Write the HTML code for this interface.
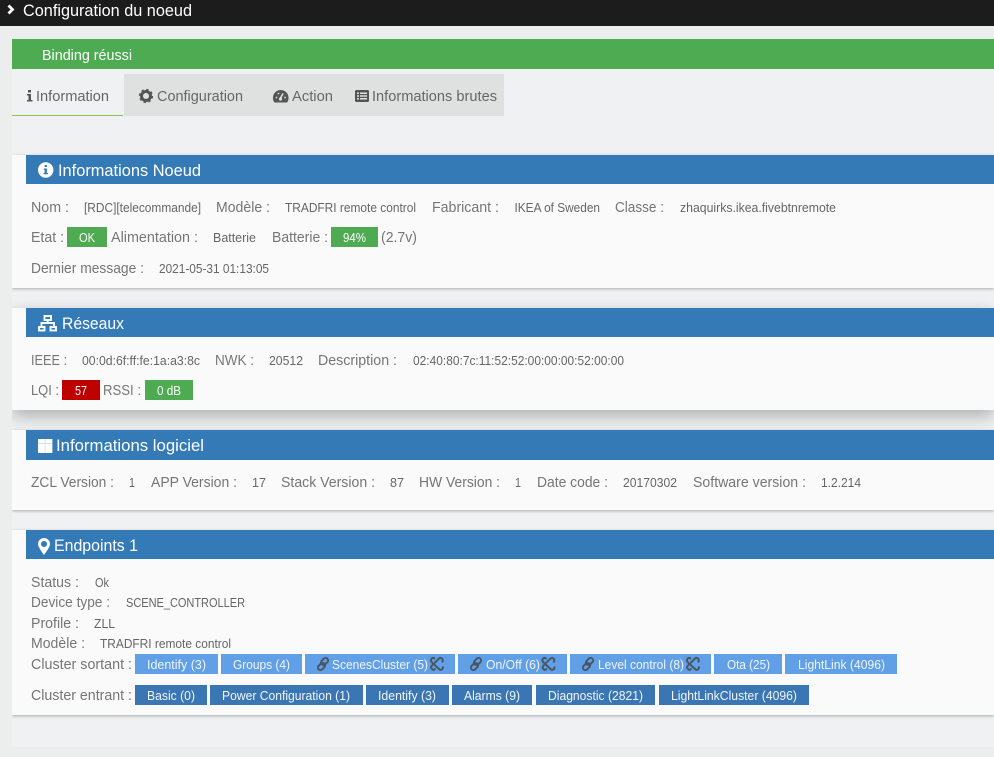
<!DOCTYPE html>
<html lang="fr"><head><meta charset="utf-8"><title>Configuration du noeud</title>
<style>
html,body{margin:0;padding:0;width:994px;height:757px;overflow:hidden;background:#eceeee}
div{position:absolute}
svg{position:absolute;left:0;top:0}
text{font-family:"Liberation Sans",sans-serif}
.l{font-size:14.5px;fill:#767676}
.v{font-size:12.5px;fill:#666}
.h{font-size:16.5px;fill:#fff}
.t{font-size:14.5px;fill:#666}
.b{font-size:12.5px;fill:#fff}
.bw{font-size:12.5px;fill:#f2f6fb}
.p{left:12px;width:982px;background:#fafafa;clip-path:inset(-40px 0 -40px 0)}
</style></head><body>
<div style="left:12px;top:26px;width:982px;height:721px;background:#f0f1f3"></div>
<div style="left:0;top:0;width:994px;height:26px;background:#1c1c1c"></div>
<div style="left:12px;top:26px;width:982px;height:13px;background:#eceeee"></div>
<div style="left:12px;top:39px;width:982px;height:30px;background:#4eab52"></div>
<div style="left:124px;top:74px;width:380px;height:42px;background:#dfe1e0"></div>
<div style="left:12px;top:115px;width:111px;height:1px;background:#8bc34a"></div>
<div class="p" style="top:155px;height:133px;box-shadow:0 1px 3px rgba(0,0,0,.3)"></div>
<div class="p" style="top:308px;height:102px;box-shadow:0 6px 16px rgba(0,0,0,.28)"></div>
<div class="p" style="top:430px;height:80px;box-shadow:0 1px 3px rgba(0,0,0,.3)"></div>
<div class="p" style="top:530px;height:185px;box-shadow:0 1px 3px rgba(0,0,0,.3)"></div>
<div style="left:26px;top:155px;width:968px;height:29px;background:#337ab7"></div>
<div style="left:26px;top:308px;width:968px;height:29px;background:#337ab7"></div>
<div style="left:26px;top:430px;width:968px;height:30px;background:#337ab7"></div>
<div style="left:26px;top:530px;width:968px;height:29px;background:#337ab7"></div>
<div style="left:67px;top:227px;width:40px;height:20px;background:#4eab52"></div>
<div style="left:331px;top:227px;width:47px;height:20px;background:#4eab52"></div>
<div style="left:62px;top:380px;width:38px;height:20px;background:#be0000"></div>
<div style="left:145px;top:380px;width:48px;height:20px;background:#4eab52"></div>
<div style="left:135px;top:654px;width:83px;height:20px;background:#619fe6"></div>
<div style="left:221px;top:654px;width:81px;height:20px;background:#619fe6"></div>
<div style="left:305px;top:654px;width:150px;height:20px;background:#619fe6"></div>
<div style="left:458px;top:654px;width:109px;height:20px;background:#619fe6"></div>
<div style="left:570px;top:654px;width:141px;height:20px;background:#619fe6"></div>
<div style="left:714px;top:654px;width:68px;height:20px;background:#619fe6"></div>
<div style="left:785px;top:654px;width:112px;height:20px;background:#619fe6"></div>
<div style="left:135px;top:685px;width:72px;height:20px;background:#3a76b4"></div>
<div style="left:210px;top:685px;width:153px;height:20px;background:#3a76b4"></div>
<div style="left:366px;top:685px;width:83px;height:20px;background:#3a76b4"></div>
<div style="left:452px;top:685px;width:80px;height:20px;background:#3a76b4"></div>
<div style="left:536px;top:685px;width:119px;height:20px;background:#3a76b4"></div>
<div style="left:659px;top:685px;width:150px;height:20px;background:#3a76b4"></div>

<svg width="994" height="757" viewBox="0 0 994 757" xmlns="http://www.w3.org/2000/svg">
<defs>
<g id="lk" fill="none" stroke="#4a5560" stroke-width="1.9">
<rect x="-1" y="-6.5" width="5" height="8" rx="2.5" transform="rotate(45 1.5 -2.5)"/>
<rect x="-4" y="-1.5" width="5" height="8" rx="2.5" transform="rotate(45 -1.5 2.5)"/>
</g>
<g id="ul" fill="none" stroke="#4a5560" stroke-width="1.9">
<path d="M-2 -5 L-3.2 -6 Q-5 -6.5 -6 -4.5 Q-6.5 -3 -5 -1.500 L2.500 5.500 Q4 6.500 5.500 5 Q6.500 3.500 5.500 2.500"/>
<path d="M5 -1.500 L5.500 -2.500 Q6.500 -4 5 -5.500 Q3.500 -6.500 2 -5.500 L-5 1.500 Q-6.500 3 -5.500 4.500 Q-4 6.500 -2.500 5.500 L-1.500 4.500"/>
</g>
</defs>
<!-- top -->
<path d="M8.500 5.500 L12.500 9.500 L8.500 13.500" fill="none" stroke="#fff" stroke-width="2.800"/>
<text class="h" x="23" y="16" textLength="169" lengthAdjust="spacingAndGlyphs">Configuration du noeud</text>
<text x="42" y="60" font-size="14.5" fill="#fff" textLength="90" lengthAdjust="spacingAndGlyphs">Binding réussi</text>
<!-- tabs -->
<path d="M28 90h3v2.500h-3zM27 94h4v6h1.500v1.500h-5.500v-1.500h1.500v-4.500h-1.500z" fill="#555"/>
<text class="t" x="36" y="101" textLength="73" lengthAdjust="spacingAndGlyphs">Information</text>
<circle cx="146" cy="96" r="4.500" fill="none" stroke="#555" stroke-width="3"/>
<circle cx="146" cy="96" r="6.200" fill="none" stroke="#555" stroke-width="1.800" stroke-dasharray="2.400 2.470"/>
<text class="t" x="157" y="101" textLength="86" lengthAdjust="spacingAndGlyphs">Configuration</text>
<path d="M274.500 102.500 A7.800 7.800 0 1 1 287 102.500 Z" fill="#555"/>
<path d="M280.500 98 L283 93.500" stroke="#dfe1e0" stroke-width="1.500"/>
<circle cx="280.500" cy="99" r="1.600" fill="#dfe1e0"/>
<circle cx="276.500" cy="97.500" r=".9" fill="#dfe1e0"/>
<circle cx="278.500" cy="93.500" r=".9" fill="#dfe1e0"/>
<circle cx="285" cy="97.500" r=".9" fill="#dfe1e0"/>
<text class="t" x="292" y="101" textLength="41" lengthAdjust="spacingAndGlyphs">Action</text>
<rect x="355" y="90" width="14" height="12" rx="1.500" fill="#555"/>
<path d="M357 92.500h2v1.500h-2zM360 92.500h7v1.500h-7zM357 95.200h2v1.500h-2zM360 95.200h7v1.500h-7zM357 98h2v1.500h-2zM360 98h7v1.500h-7z" fill="#dfe1e0"/>
<text class="t" x="372" y="101" textLength="125" lengthAdjust="spacingAndGlyphs">Informations brutes</text>
<!-- panel 1 -->
<circle cx="45.700" cy="170" r="7.700" fill="#fff"/>
<path d="M44.700 165h2.200v2h-2.200zM43.800 168.500h3.100v4.500h1v1.300h-4.300v-1.300h1v-3.200h-.8z" fill="#337ab7"/>
<text class="h" x="58" y="176" textLength="143" lengthAdjust="spacingAndGlyphs">Informations Noeud</text>
<text class="l" x="31" y="212" textLength="38" lengthAdjust="spacingAndGlyphs">Nom :</text>
<text class="v" x="84" y="212" textLength="117" lengthAdjust="spacingAndGlyphs">[RDC][telecommande]</text>
<text class="l" x="216" y="212" textLength="54" lengthAdjust="spacingAndGlyphs">Modèle :</text>
<text class="v" x="285" y="212" textLength="131" lengthAdjust="spacingAndGlyphs">TRADFRI remote control</text>
<text class="l" x="432" y="212" textLength="67" lengthAdjust="spacingAndGlyphs">Fabricant :</text>
<text class="v" x="514.500" y="212" textLength="85.500" lengthAdjust="spacingAndGlyphs">IKEA of Sweden</text>
<text class="l" x="615" y="212" textLength="49" lengthAdjust="spacingAndGlyphs">Classe :</text>
<text class="v" x="680" y="212" textLength="156" lengthAdjust="spacingAndGlyphs">zhaquirks.ikea.fivebtnremote</text>
<text class="l" x="31" y="242" textLength="33" lengthAdjust="spacingAndGlyphs">Etat :</text>
<text class="b" x="79" y="242" textLength="16" lengthAdjust="spacingAndGlyphs">OK</text>
<text class="l" x="111" y="242" textLength="87" lengthAdjust="spacingAndGlyphs">Alimentation :</text>
<text class="v" x="213" y="242" textLength="43" lengthAdjust="spacingAndGlyphs">Batterie</text>
<text class="l" x="272" y="242" textLength="56" lengthAdjust="spacingAndGlyphs">Batterie :</text>
<text class="b" x="343" y="242" textLength="23" lengthAdjust="spacingAndGlyphs">94%</text>
<text class="l" x="381" y="242" textLength="36" lengthAdjust="spacingAndGlyphs">(2.7v)</text>
<text class="l" x="31" y="273" textLength="113" lengthAdjust="spacingAndGlyphs">Dernier message :</text>
<text class="v" x="159" y="273" textLength="110" lengthAdjust="spacingAndGlyphs">2021-05-31 01:13:05</text>
<!-- panel 2 -->
<g fill="none" stroke="#fff" stroke-width="1.900">
<rect x="44.500" y="316" width="6.500" height="4"/>
<rect x="39" y="327" width="5.500" height="3.500"/>
<rect x="50.500" y="327" width="5.500" height="3.500"/>
<path d="M47.700 320v3M41.500 327v-4h12.500v4"/>
</g>
<text class="h" x="62" y="329" textLength="62" lengthAdjust="spacingAndGlyphs">Réseaux</text>
<text class="l" x="31" y="365" textLength="36" lengthAdjust="spacingAndGlyphs">IEEE :</text>
<text class="v" x="82" y="365" textLength="118" lengthAdjust="spacingAndGlyphs">00:0d:6f:ff:fe:1a:a3:8c</text>
<text class="l" x="215" y="365" textLength="39" lengthAdjust="spacingAndGlyphs">NWK :</text>
<text class="v" x="269" y="365" textLength="34" lengthAdjust="spacingAndGlyphs">20512</text>
<text class="l" x="318" y="365" textLength="79" lengthAdjust="spacingAndGlyphs">Description :</text>
<text class="v" x="413" y="365" textLength="211" lengthAdjust="spacingAndGlyphs">02:40:80:7c:11:52:52:00:00:00:52:00:00</text>
<text class="l" x="31" y="395" textLength="28" lengthAdjust="spacingAndGlyphs">LQI :</text>
<text class="b" x="75" y="395" textLength="12" lengthAdjust="spacingAndGlyphs">57</text>
<text class="l" x="103" y="395" textLength="38" lengthAdjust="spacingAndGlyphs">RSSI :</text>
<text class="b" x="157" y="395" textLength="24" lengthAdjust="spacingAndGlyphs">0 dB</text>
<!-- panel 3 -->
<path d="M38 439h14.400v14h-14.400z" fill="#fff"/>
<path d="M38 443.500h14.400M45.200 439v14" stroke="#d5e4f1" stroke-width=".9" fill="none"/>
<text class="h" x="56" y="451" textLength="148" lengthAdjust="spacingAndGlyphs">Informations logiciel</text>
<text class="l" x="31" y="487" textLength="83" lengthAdjust="spacingAndGlyphs">ZCL Version :</text>
<text class="v" x="129" y="487" textLength="6" lengthAdjust="spacingAndGlyphs">1</text>
<text class="l" x="151" y="487" textLength="86" lengthAdjust="spacingAndGlyphs">APP Version :</text>
<text class="v" x="252" y="487" textLength="14" lengthAdjust="spacingAndGlyphs">17</text>
<text class="l" x="281" y="487" textLength="94" lengthAdjust="spacingAndGlyphs">Stack Version :</text>
<text class="v" x="390" y="487" textLength="14" lengthAdjust="spacingAndGlyphs">87</text>
<text class="l" x="419" y="487" textLength="81" lengthAdjust="spacingAndGlyphs">HW Version :</text>
<text class="v" x="515" y="487" textLength="6" lengthAdjust="spacingAndGlyphs">1</text>
<text class="l" x="537" y="487" textLength="71" lengthAdjust="spacingAndGlyphs">Date code :</text>
<text class="v" x="623" y="487" textLength="54" lengthAdjust="spacingAndGlyphs">20170302</text>
<text class="l" x="693" y="487" textLength="113" lengthAdjust="spacingAndGlyphs">Software version :</text>
<text class="v" x="821" y="487" textLength="40" lengthAdjust="spacingAndGlyphs">1.2.214</text>
<!-- panel 4 -->
<path d="M44 538 a6 6 0 0 1 6 6 c0 3-4 8-6 11 c-2-3-6-8-6-11 a6 6 0 0 1 6-6z M44 541 a3 3 0 1 0 .01 0z" fill="#fff" fill-rule="evenodd"/>
<text class="h" x="54" y="551" textLength="84" lengthAdjust="spacingAndGlyphs">Endpoints 1</text>
<text class="l" x="31" y="587" textLength="48" lengthAdjust="spacingAndGlyphs">Status :</text>
<text class="v" x="95" y="587" textLength="14" lengthAdjust="spacingAndGlyphs">Ok</text>
<text class="l" x="31" y="607" textLength="79" lengthAdjust="spacingAndGlyphs">Device type :</text>
<text class="v" x="126" y="607" textLength="119" lengthAdjust="spacingAndGlyphs">SCENE_CONTROLLER</text>
<text class="l" x="31" y="628" textLength="48" lengthAdjust="spacingAndGlyphs">Profile :</text>
<text class="v" x="94" y="628" textLength="21" lengthAdjust="spacingAndGlyphs">ZLL</text>
<text class="l" x="31" y="648" textLength="54" lengthAdjust="spacingAndGlyphs">Modèle :</text>
<text class="v" x="100" y="648" textLength="131" lengthAdjust="spacingAndGlyphs">TRADFRI remote control</text>
<text class="l" x="31" y="669" textLength="101" lengthAdjust="spacingAndGlyphs">Cluster sortant :</text>
<text class="bw" x="147" y="669" textLength="59" lengthAdjust="spacingAndGlyphs">Identify (3)</text>
<text class="bw" x="233" y="669" textLength="57" lengthAdjust="spacingAndGlyphs">Groups (4)</text>
<use href="#lk" x="323" y="664"/>
<text class="bw" x="332" y="669" textLength="96" lengthAdjust="spacingAndGlyphs">ScenesCluster (5)</text>
<use href="#ul" x="437" y="664"/>
<use href="#lk" x="476" y="664"/>
<text class="bw" x="486" y="669" textLength="54" lengthAdjust="spacingAndGlyphs">On/Off (6)</text>
<use href="#ul" x="548.500" y="664"/>
<use href="#lk" x="588" y="664"/>
<text class="bw" x="598" y="669" textLength="86" lengthAdjust="spacingAndGlyphs">Level control (8)</text>
<use href="#ul" x="693" y="664"/>
<text class="bw" x="727" y="669" textLength="43" lengthAdjust="spacingAndGlyphs">Ota (25)</text>
<text class="bw" x="798" y="669" textLength="87" lengthAdjust="spacingAndGlyphs">LightLink (4096)</text>
<text class="l" x="31" y="700" textLength="101" lengthAdjust="spacingAndGlyphs">Cluster entrant :</text>
<text class="bw" x="147" y="700" textLength="48" lengthAdjust="spacingAndGlyphs">Basic (0)</text>
<text class="bw" x="222" y="700" textLength="128" lengthAdjust="spacingAndGlyphs">Power Configuration (1)</text>
<text class="bw" x="378" y="700" textLength="58" lengthAdjust="spacingAndGlyphs">Identify (3)</text>
<text class="bw" x="464" y="700" textLength="56" lengthAdjust="spacingAndGlyphs">Alarms (9)</text>
<text class="bw" x="548" y="700" textLength="95" lengthAdjust="spacingAndGlyphs">Diagnostic (2821)</text>
<text class="bw" x="671" y="700" textLength="126" lengthAdjust="spacingAndGlyphs">LightLinkCluster (4096)</text>
</svg>
</body></html>
